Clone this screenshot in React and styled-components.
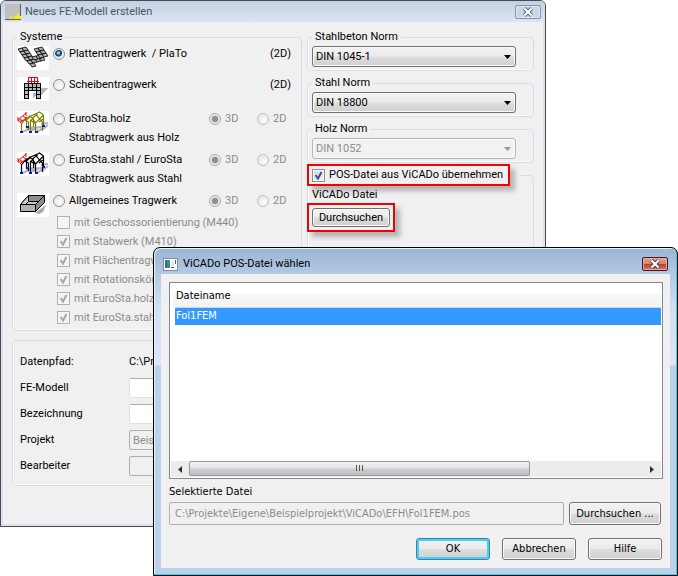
import React, { useState } from "react";
import styled, { createGlobalStyle, css } from "styled-components";

const GlobalStyle = createGlobalStyle`
  * {
    box-sizing: border-box;
  }

  body {
    margin: 0;
    background: #fff;
  }

  button, input, select {
    font: inherit;
    color: inherit;
    margin: 0;
  }
`;

const Desktop = styled.div`
  position: relative;
  min-height: 100vh;
  overflow: hidden;
  font-family: Roboto, "Liberation Sans", Arial, sans-serif;
  font-size: 11px;
  line-height: 14px;
  color: #000;
`;

const MainWindow = styled.main`
  width: calc(100% - 132px);
  border: 1px solid #4c4a50;
  border-radius: 6px 6px 0 0;
  background: #f0f0f0;
  box-shadow: inset 2px -2px 0 #dbe4ee, inset -2px 0 0 #dbe4ee;
`;

const TitleBar = styled.header`
  display: flex;
  align-items: center;
  height: 21px;
  padding: 0 4px;
  gap: 4px;
  border-radius: 5px 5px 0 0;
  color: #4a5560;
  background: linear-gradient(#c3d1e2, #d9e5f3);

  h1 {
    flex: 1;
    margin: 0;
    font: inherit;
  }
`;

const CloseButton = styled.button`
  display: flex;
  align-items: center;
  justify-content: center;
  width: 26px;
  height: 14px;
  padding: 0;
  border: 1px solid #8794a8;
  border-radius: 2px;
  background: #c9d6e6;
  box-shadow: inset 0 0 0 1px #dce6f1;

  ${({ $active }) =>
    $active &&
    css`
      border-color: #4b1620;
      background: linear-gradient(#e2a096, #d58375 48%, #b9402a 52%, #cf7a66);
      box-shadow: inset 0 0 0 1px #e5aba0;
    `}
`;

const MainBody = styled.div`
  padding: 8px 11px 40px;
`;

const Columns = styled.div`
  display: grid;
  grid-template-columns: 290px 1fr;
  gap: 5px;
`;

const Group = styled.fieldset`
  min-width: 0;
  margin: 0;
  padding: 0 4px 3px;
  border: 1px solid #d3dfe8;
  border-radius: 4px;
  box-shadow: inset 1px 0 0 #fafcfd, inset 0 -1px 0 #fafcfd;

  & > legend {
    padding: 0 3px;
  }
`;

const SystemGroup = styled(Group)`
  padding-top: 2px;
`;

const SystemRow = styled.div`
  display: flex;
  align-items: flex-start;
  gap: 4px;
  min-height: ${({ $height }) => $height}px;

  & > svg {
    flex: none;
  }
`;

const SystemMain = styled.div`
  flex: 1;
  min-width: 0;
`;

const OptionLine = styled.div`
  display: grid;
  grid-template-columns: 1fr 48px 40px;
  align-items: center;
  height: 16px;
`;

const Dimension = styled.span`
  grid-column: 3;
  justify-self: end;
  padding-right: 6px;
`;

const SubText = styled.div`
  margin-top: 4px;
  padding-left: 16px;
`;

const Choice = styled.label`
  display: flex;
  align-items: center;
  gap: 4px;
  white-space: nowrap;
  color: ${({ $muted }) => ($muted ? "#8c8c8c" : "#000")};
`;

const Radio = styled.input.attrs({ type: "radio" })`
  appearance: none;
  flex: none;
  width: 12px;
  height: 12px;
  border: 1px solid #8e8f8f;
  border-radius: 50%;
  background: radial-gradient(circle at 60% 65%, #fff, #d5d8dc);
  box-shadow: inset 0 0 0 1px #f2f2f2;

  &:checked {
    background: radial-gradient(
      circle at 45% 40%,
      #7cd3f7 0 1px,
      #1f6393 2px,
      #12304a 3px,
      #dfe5ea 4px
    );
  }

  &:disabled {
    border-color: #c0c0c0;
  }

  &:disabled:checked {
    border-color: #a5a5a5;
    background: radial-gradient(circle, #8e8e8e 0 2px, #a0a0a0 3px, #f0f0f0 4px);
  }
`;

const CheckList = styled.div`
  margin-top: 4px;
  padding-left: 4px;

  label {
    height: 19px;
  }
`;

const CheckFrame = styled.span`
  display: inline-grid;
  flex: none;
  width: 13px;
  height: 13px;

  & > * {
    grid-area: 1 / 1;
  }

  input {
    appearance: none;
    width: 13px;
    height: 13px;
    border: 1px solid ${({ $muted }) => ($muted ? "#b1b1b1" : "#8e8f8f")};
    background: ${({ $muted }) =>
      $muted ? "#f4f4f4" : "linear-gradient(135deg, #cfd3d9, #f6f6f6)"};
    box-shadow: inset 0 0 0 1px #f6f6f6;
  }

  svg {
    pointer-events: none;
  }
`;

const NormColumn = styled.div`
  display: flex;
  flex-direction: column;
  gap: 5px;
`;

const SelectFrame = styled.div`
  display: grid;
  align-items: center;
  width: 204px;
  margin-top: 2px;

  & > * {
    grid-area: 1 / 1;
  }

  select {
    appearance: none;
    width: 100%;
    height: 21px;
    padding: 0 3px;
    border: 1px solid #707070;
    border-radius: 3px;
    background: linear-gradient(#f2f2f2, #ebebeb 48%, #dddddd 52%, #cfcfcf);
    box-shadow: inset 0 0 0 1px #fafafa;
  }

  select:disabled {
    border-color: #b5b5b5;
    background: #f2f2f2;
    color: #8c8c8c;
    opacity: 1;
  }

  svg {
    justify-self: end;
    margin-right: 5px;
    pointer-events: none;
  }
`;

const Highlight = styled.div`
  display: flex;
  align-items: center;
  width: ${({ $width }) => $width}px;
  height: ${({ $height }) => $height}px;
  padding: 0 3px;
  border: 2px solid #f00000;
  background: #f0f0f0;
  box-shadow: 5px 5px 5px rgba(0, 0, 0, 0.25);
`;

const VicadoGroup = styled(Group)`
  flex: 1;
  margin-top: -4px;
  padding: 0 0 12px;

  & > legend {
    margin-left: -1px;
    padding: 0 10px 0 0;
  }

  p {
    margin: 2px 0 1px 4px;
  }

  & > ${Highlight} {
    margin-left: -1px;
  }
`;

const Button = styled.button`
  width: ${({ $width }) => $width}px;
  height: ${({ $height }) => $height || 22}px;
  padding: 0;
  border: 1px solid #707070;
  border-radius: 3px;
  background: linear-gradient(#f2f2f2, #ebebeb 48%, #dddddd 52%, #cfcfcf);
  box-shadow: inset 0 0 0 1px #fafafa;
  color: #000;

  ${({ $primary }) =>
    $primary &&
    css`
      border-color: #3c7fb1;
      box-shadow: inset 0 0 0 2px #46d0f6;
    `}
`;

const DataGroup = styled(Group)`
  display: grid;
  grid-template-columns: 109px 1fr;
  align-items: center;
  margin-top: 9px;
  padding: 8px 7px 6px;
`;

const DataRow = styled.div`
  display: grid;
  grid-template-columns: subgrid;
  grid-column: 1 / -1;
  align-items: center;
  height: 26px;
`;

const Field = styled.input`
  width: 100%;
  height: 20px;
  padding: 0 3px;
  border: 1px solid #dbe1e6;
  border-top-color: #abadb3;
  border-radius: 2px;
  background: #fff;

  &:disabled {
    border-color: #afafaf;
    background: #f0f0f0;
    color: #8c8c8c;
  }
`;

const Dialog = styled.section`
  position: absolute;
  top: 247px;
  left: 153px;
  right: 0;
  padding: 0 7px 7px;
  border: 1px solid #000;
  border-radius: 7px 7px 0 0;
  background: linear-gradient(#9ab4d2, #b2c9e4 26px, #cfe0f1 60px, #d9e7f6 117px, #b9d1ea 118px);
  box-shadow: inset -1px -1px 0 #2fd3f0, inset 1px 1px 0 #e9f1f9;
  font-family: "DejaVu Sans Condensed", "Noto Sans", Tahoma, sans-serif;
`;

const DialogTitle = styled.header`
  display: flex;
  align-items: center;
  gap: 5px;
  height: 26px;
  padding: 6px 2px 0 2px;
  font-family: Roboto, "Liberation Sans", Arial, sans-serif;

  h2 {
    flex: 1;
    margin: 0;
    font: inherit;
  }
`;

const DialogBody = styled.div`
  padding: 8px 7px 8px 8px;
  background: #f0f0f0;
`;

const ListBox = styled.div`
  display: flex;
  flex-direction: column;
  height: 197px;
  padding: 1px;
  border: 1px solid #828790;
  background: #fff;
`;

const FileTable = styled.table`
  width: 100%;
  border-collapse: collapse;

  th,
  td {
    padding: 0 1px;
    font-weight: normal;
    text-align: left;
  }

  th {
    height: 23px;
    padding: 2px 3px 0;
    border-bottom: 1px solid #d5d5d5;
    background: linear-gradient(#fff 40%, #f7f8fa 44%, #f1f2f4);
  }

  td {
    height: 18px;
    background: #3399ff;
    color: #fff;
  }
`;

const Rows = styled.tbody`
  border-left: 4px solid #fff;
  border-top: 1px solid #fff;
`;

const ScrollBar = styled.div`
  display: flex;
  justify-content: space-between;
  height: 16px;
  margin-top: auto;
  background: #ececec;

  button {
    display: flex;
    align-items: center;
    justify-content: center;
    width: 18px;
    padding: 0;
    border: none;
    background: none;
  }
`;

const Track = styled.div`
  flex: 1;
`;

const Thumb = styled.div`
  display: flex;
  align-items: center;
  justify-content: center;
  width: 75%;
  height: 15px;
  border: 1px solid #979797;
  border-radius: 2px;
  background: linear-gradient(#f3f3f3, #e4e4e6 45%, #cfcfd1 55%, #bdbdc0);
`;

const FileLabel = styled.label`
  display: block;
  margin: 6px 0 3px;
`;

const FileRow = styled.div`
  display: flex;
  gap: 5px;
  padding-right: 2px;

  ${Field} {
    flex: 1;
    height: 23px;
    padding: 0 5px;
  }
`;

const Actions = styled.footer`
  display: flex;
  justify-content: flex-end;
  gap: 12px;
  margin-top: 13px;
  padding-right: 1px;
`;

const CloseCross = ({ color }) => (
  <svg width="12" height="10" viewBox="0 0 12 10">
    <path d="M2.5 1.5l7 7M9.5 1.5l-7 7" stroke={color} strokeWidth="4" />
    <path d="M2.5 1.5l7 7M9.5 1.5l-7 7" stroke="#fff" strokeWidth="2" />
  </svg>
);

const AppIcon = () => (
  <svg width="16" height="16" viewBox="0 0 16 16" shapeRendering="crispEdges">
    <rect width="16" height="16" fill="#c0c0c0" />
    <path d="M0 15.5h16M15.5 0v16" stroke="#606060" />
    <path d="M5 15v-3h1v2h2v-2h1v2h1v-2h2v-2h2v2h2v3z" fill="#ffee00" />
  </svg>
);

const DialogIcon = () => (
  <svg width="15" height="13" viewBox="0 0 15 13" shapeRendering="crispEdges">
    <rect x="0.5" y="0.5" width="14" height="12" fill="#fff" stroke="#80909c" />
    <rect x="2" y="2" width="5" height="8" fill="#3f8f7d" />
    <rect x="2" y="2" width="2" height="8" fill="#3a6a9c" />
    <path d="M8 9h3v1H8zM12 2h1v4h-1z" fill="#50606a" />
    <rect x="8" y="3" width="3" height="5" fill="#e2ebf0" />
  </svg>
);

// origins of the slab tiles, arranged round the open recess
const PLATE_TILES = [
  [1, 3], [5, 2],
  [3, 6], [7, 5],
  [5, 9], [9, 8],
  [7, 12], [11, 11],
  [10, 15], [14, 14], [18, 13], [22, 12],
  [13, 18],
  [15, 11], [19, 10],
  [17, 3], [21, 2], [19, 6], [23, 5], [21, 9], [25, 8],
];

const PlateIcon = () => (
  <svg width="32" height="24" viewBox="0 0 32 24">
    <rect width="32" height="24" fill="#fff" />
    {PLATE_TILES.map(([x, y]) => (
      <path
        key={`${x}-${y}`}
        d={`M${x} ${y}l4 -1l2 3l-4 1z`}
        fill="#b0b0b0"
        stroke="#000"
        strokeWidth="0.8"
      />
    ))}
  </svg>
);

const WallIcon = () => (
  <svg width="32" height="24" viewBox="0 0 32 24" shapeRendering="crispEdges">
    <rect width="32" height="24" fill="#fff" />
    <path d="M24 11h7l-7 8zM16 16h3v2l-3 4z" fill="#b8b8b8" />
    <path d="M7 6h17v16h-5v-8h-7v8H7z" fill="#b8b8b8" />
    <path
      d="M7.500 6v16M11.500 6v16M15.500 6v8M19.500 6v16M23.500 6v16M7 6.500h17M7 10.500h17M7 13.500h17M7 17.500h5M19 17.500h5M7 21.500h5M19 21.500h5"
      stroke="#000"
      fill="none"
    />
    <path d="M11.500 6V.5h9V6M14.500 0v6M17.500 0v6" stroke="#f00000" fill="none" />
    <path d="M10 4h3v1h-3zM13 4h3v1h-3zM16 4h3v1h-3zM19 4h3v1h-3z" fill="#f00000" />
  </svg>
);

const FrameIcon = ({ color }) => (
  <svg width="32" height="24" viewBox="0 0 32 24">
    <rect width="32" height="24" fill="#fff" />
    <path
      d="M5 21l8-3M13 20l8-3M19 21l10-5M9 17l17-1M24 13l7-1M26 18l5-4"
      stroke="#b4b4b4"
      strokeWidth="2"
    />
    <path
      d="M4.500 21v-8l3-4 4 2v8M9.500 17V9l3-4 4 3v8M13.500 21V10l3-3M18.500 21v-9l4-4 3 3v9M22.500 8l-4-5-5 2-4 4M18.500 3l4-2 4 3v11M22.500 8l4-4M18.500 12l-3-5 5-4M7.500 9l6-4M13 9l5 3M26 8l-4 3"
      stroke={color}
      strokeWidth="1.200"
      fill="none"
    />
    <path d="M1 9l8-7M3 12l7-6M1 6v4h4M9 1v4M3 8l3 2M6 5l3 2" stroke="#f00000" fill="none" />
    <path
      d="M3 20h3v2H3zM12 20h3v2h-3zM18 20h3v2h-3zM9 15h3v2H9zM25 14h3v2h-3z"
      fill="#0018e0"
    />
  </svg>
);

const BoxIcon = () => (
  <svg width="32" height="24" viewBox="0 0 32 24">
    <rect width="32" height="24" fill="#fff" />
    <path d="M18 20l11-8-3 7-4 2z" fill="#a8a8a8" />
    <g stroke="#000" strokeLinejoin="round">
      <path d="M3.500 11.500l8-9h16l-9 9z" fill="#c8c8c8" />
      <path d="M11.500 2.500h16l-6 6h-10z" fill="#8e8e8e" />
      <path d="M3.500 11.500l8-9v6l-3 3z" fill="#d0d0d0" />
      <path d="M18.500 11.500l9-9v7l-9 9z" fill="#8c8c8c" />
      <path d="M3.500 11.500h15v7h-15z" fill="#b4b4b4" />
    </g>
  </svg>
);

const Tick = ({ color }) => (
  <svg width="13" height="13" viewBox="0 0 13 13">
    <path d="M3.500 6l2.500 3.500L9.500 3" stroke={color} strokeWidth="2" fill="none" />
  </svg>
);

const Arrow = ({ color, d = "M0 0h7L3.500 4z", width = 7, height = 4 }) => (
  <svg width={width} height={height} viewBox={`0 0 ${width} ${height}`}>
    <path d={d} fill={color} />
  </svg>
);

const Check = ({ label, muted, ...rest }) => (
  <Choice $muted={muted}>
    <CheckFrame $muted={muted}>
      <input type="checkbox" disabled={muted} {...rest} />
      {rest.checked && <Tick color={muted ? "#a8a8a8" : "#3a4f9e"} />}
    </CheckFrame>
    {label}
  </Choice>
);

const SpaceChoice = ({ name }) => (
  <>
    <Choice $muted>
      <Radio name={name} disabled defaultChecked />
      3D
    </Choice>
    <Choice $muted>
      <Radio name={name} disabled />
      2D
    </Choice>
  </>
);

const SYSTEMS = [
  { id: "plato", label: "Plattentragwerk\u00a0 / PlaTo", icon: <PlateIcon />, height: 31, flat: true },
  { id: "scheibe", label: "Scheibentragwerk", icon: <WallIcon />, height: 34, flat: true },
  { id: "holz", label: "EuroSta.holz", sub: "Stabtragwerk aus Holz", icon: <FrameIcon color="#808000" />, height: 41 },
  { id: "stahl", label: "EuroSta.stahl / EuroSta", sub: "Stabtragwerk aus Stahl", icon: <FrameIcon color="#000" />, height: 41 },
  { id: "allgemein", label: "Allgemeines Tragwerk", icon: <BoxIcon />, height: 24, modules: true },
];

const MODULES = [
  ["mit Geschossorientierung (M440)", false],
  ["mit Stabwerk (M410)", true],
  ["mit Flächentragwerk", true],
  ["mit Rotationskörper", true],
  ["mit EuroSta.holz", true],
  ["mit EuroSta.stahl", true],
];

const NORMS = [
  { label: "Stahlbeton Norm", value: "DIN 1045-1" },
  { label: "Stahl Norm", value: "DIN 18800" },
  { label: "Holz Norm", value: "DIN 1052", disabled: true },
];

const NormGroup = ({ label, value, disabled }) => (
  <Group>
    <legend>{label}</legend>
    <SelectFrame>
      <select aria-label={label} defaultValue={value} disabled={disabled}>
        <option>{value}</option>
      </select>
      <Arrow color={disabled ? "#9a9a9a" : "#000"} />
    </SelectFrame>
  </Group>
);

const FileDialog = () => (
  <Dialog role="dialog" aria-labelledby="dialog-title">
    <DialogTitle>
      <DialogIcon />
      <h2 id="dialog-title">ViCADo POS-Datei wählen</h2>
      <CloseButton $active aria-label="Schließen">
        <CloseCross color="#4a4a5c" />
      </CloseButton>
    </DialogTitle>
    <DialogBody>
      <ListBox>
        <FileTable>
          <thead>
            <tr>
              <th>Dateiname</th>
            </tr>
          </thead>
          <Rows>
            <tr>
              <td>Fol1FEM</td>
            </tr>
          </Rows>
        </FileTable>
        <ScrollBar>
          <button aria-label="Nach links">
            <Arrow color="#333" d="M4 0v7L0 3.500z" width={4} height={7} />
          </button>
          <Track>
            <Thumb>
              <svg width="9" height="7" shapeRendering="crispEdges">
                <path d="M1.500 0v6M4.500 0v6M7.500 0v6" stroke="#555" />
              </svg>
            </Thumb>
          </Track>
          <button aria-label="Nach rechts">
            <Arrow color="#333" d="M0 0v7l4-3.500z" width={4} height={7} />
          </button>
        </ScrollBar>
      </ListBox>
      <FileLabel htmlFor="selected-file">Selektierte Datei</FileLabel>
      <FileRow>
        <Field
          id="selected-file"
          disabled
          defaultValue="C:\Projekte\Eigene\Beispielprojekt\ViCADo\EFH\Fol1FEM.pos"
        />
        <Button $width={92} $height={23}>Durchsuchen ...</Button>
      </FileRow>
      <Actions>
        <Button $width={74} $primary>OK</Button>
        <Button $width={74}>Abbrechen</Button>
        <Button $width={74}>Hilfe</Button>
      </Actions>
    </DialogBody>
  </Dialog>
);

const App = () => {
  const [system, setSystem] = useState("plato");
  const [usePos, setUsePos] = useState(true);

  return (
    <Desktop>
      <GlobalStyle />
      <MainWindow>
        <TitleBar>
          <AppIcon />
          <h1>Neues FE-Modell erstellen</h1>
          <CloseButton aria-label="Schließen">
            <CloseCross color="#5a6676" />
          </CloseButton>
        </TitleBar>
        <MainBody>
          <Columns>
            <SystemGroup>
              <legend>Systeme</legend>
              {SYSTEMS.map(({ id, label, sub, icon, height, flat, modules }) => (
                <SystemRow key={id} $height={height}>
                  {icon}
                  <SystemMain>
                    <OptionLine>
                      <Choice>
                        <Radio
                          name="system"
                          checked={system === id}
                          onChange={() => setSystem(id)}
                        />
                        {label}
                      </Choice>
                      {flat ? <Dimension>(2D)</Dimension> : <SpaceChoice name={`${id}-space`} />}
                    </OptionLine>
                    {sub && <SubText>{sub}</SubText>}
                    {modules && (
                      <CheckList>
                        {MODULES.map(([text, checked]) => (
                          <Check key={text} label={text} checked={checked} readOnly muted />
                        ))}
                      </CheckList>
                    )}
                  </SystemMain>
                </SystemRow>
              ))}
            </SystemGroup>
            <NormColumn>
              {NORMS.map((norm) => (
                <NormGroup key={norm.label} {...norm} />
              ))}
              <VicadoGroup>
                <legend>
                  <Highlight $width={203} $height={22}>
                    <Check
                      label="POS-Datei aus ViCADo übernehmen"
                      checked={usePos}
                      onChange={() => setUsePos(!usePos)}
                    />
                  </Highlight>
                </legend>
                <p>ViCADo Datei</p>
                <Highlight $width={88} $height={29}>
                  <Button $width={78} $height={19}>Durchsuchen</Button>
                </Highlight>
              </VicadoGroup>
            </NormColumn>
          </Columns>
          <DataGroup aria-label="Modelldaten">
            <DataRow>
              <span>Datenpfad:</span>
              <span>C:\Projekte\Eigene</span>
            </DataRow>
            <DataRow>
              <label htmlFor="model">FE-Modell</label>
              <Field id="model" />
            </DataRow>
            <DataRow>
              <label htmlFor="title">Bezeichnung</label>
              <Field id="title" />
            </DataRow>
            <DataRow>
              <label htmlFor="project">Projekt</label>
              <Field id="project" disabled defaultValue="Beispielprojekt" />
            </DataRow>
            <DataRow>
              <label htmlFor="editor">Bearbeiter</label>
              <Field id="editor" disabled />
            </DataRow>
          </DataGroup>
        </MainBody>
      </MainWindow>
      <FileDialog />
    </Desktop>
  );
};

export default App;
